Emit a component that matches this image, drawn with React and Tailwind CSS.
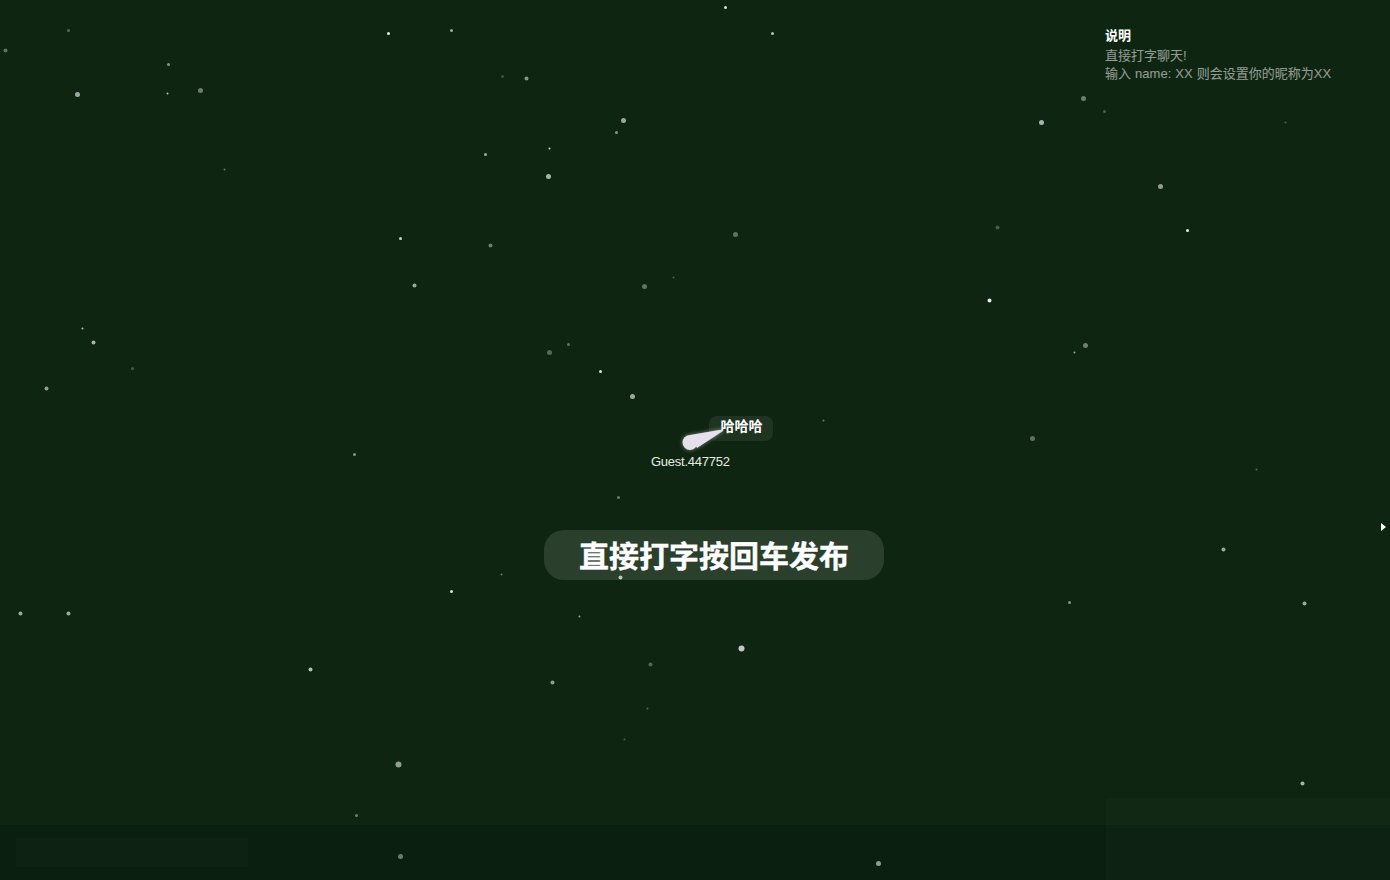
const stars = [
  [5, 50, 4, 0.35], [68, 30, 3, 0.3], [388, 33, 3, 0.9], [451, 30, 3, 0.6], [725, 7, 3, 0.85], [772, 33, 3, 0.7],
  [168, 64, 3, 0.5], [77, 94, 5, 0.6], [167, 93, 2, 0.7], [200, 90, 5, 0.4], [502, 76, 3, 0.2], [526, 78, 4, 0.5],
  [623, 120, 5, 0.6], [616, 132, 3, 0.5], [549, 148, 2, 0.8], [485, 154, 3, 0.6], [548, 176, 5, 0.65], [224, 169, 2, 0.35],
  [1083, 98, 5, 0.4], [1104, 111, 3, 0.25], [1041, 122, 5, 0.65], [1285, 122, 2, 0.3], [1160, 186, 5, 0.55], [1187, 230, 3, 0.9],
  [997, 227, 4, 0.25], [735, 234, 5, 0.35], [400, 238, 3, 0.8], [490, 245, 4, 0.4], [673, 277, 2, 0.25], [414, 285, 4, 0.6],
  [644, 286, 5, 0.35], [989, 300, 4, 0.9], [82, 328, 2, 0.7], [93, 342, 4, 0.65], [568, 344, 3, 0.35], [549, 352, 5, 0.3],
  [1085, 345, 5, 0.4], [1074, 352, 2, 0.6], [132, 368, 3, 0.25], [600, 371, 3, 0.85], [46, 388, 4, 0.55], [632, 396, 5, 0.6],
  [823, 420, 2, 0.4], [1032, 438, 5, 0.35], [354, 454, 3, 0.5], [1256, 469, 2, 0.3], [618, 497, 3, 0.4], [1223, 549, 4, 0.6],
  [501, 574, 2, 0.4], [620, 577, 4, 0.7], [451, 591, 3, 0.85], [1069, 602, 3, 0.5], [1304, 603, 4, 0.6], [20, 613, 4, 0.6], [68, 613, 4, 0.6],
  [579, 616, 2, 0.6], [741, 648, 6, 0.75], [650, 664, 4, 0.3], [310, 669, 4, 0.7], [552, 682, 4, 0.55], [647, 708, 2, 0.3],
  [624, 739, 2, 0.25], [398, 764, 6, 0.55], [1302, 783, 4, 0.65], [356, 815, 3, 0.4], [400, 856, 5, 0.4], [878, 863, 5, 0.55],
]

function Star({ x, y, size, opacity }) {
  return (
    <div
      className="absolute rounded-full bg-white"
      style={{
        left: x - size / 2,
        top: y - size / 2,
        width: size,
        height: size,
        opacity,
        transform: size % 2 === 0 ? 'translate(0.5px, 0.5px)' : undefined,
      }}
    />
  )
}

export default function App() {
  return (
    <div className="relative flex h-screen w-full flex-col overflow-hidden bg-[#0e2511] font-['Liberation_Sans','Noto_Sans_CJK_SC',sans-serif]">
      <main className="flex flex-1 flex-col">
        {/* Instructions */}
        <div className="flex justify-end pt-[27px]">
          <div className="w-[285px] text-[13px] leading-[17px]">
            <h3 className="font-bold text-white">说明</h3>
            <p className="mt-[3px] text-white/55">直接打字聊天!</p>
            <p className="mt-px text-white/55 [word-spacing:0.5px]">输入 name: XX 则会设置你的昵称为XX</p>
          </div>
        </div>

        {/* Hint */}
        <div className="flex justify-center pl-[38px] pt-[448px]">
          <div className="flex h-[50px] w-[340px] items-center justify-center rounded-[20px] bg-white/[0.12] pt-[3px] text-[30px] font-bold text-white [-webkit-text-stroke:0.4px_white]">
            直接打字按回车发布
          </div>
        </div>
      </main>

      {stars.map(([x, y, size, opacity]) => (
        <Star key={`${x}-${y}`} x={x} y={y} size={size} opacity={opacity} />
      ))}

      {/* Player on the canvas */}
      <div className="absolute left-[709px] top-[416px] flex h-[25px] w-[64px] justify-center rounded-lg bg-white/[0.07] pl-[1px] pt-[2px] text-[14px] font-bold leading-[17px] text-white">
        哈哈哈
      </div>
      <svg className="absolute left-[675px] top-[420px] drop-shadow-[0_0_2px_rgba(255,255,255,0.45)]" width="60" height="35" viewBox="0 0 60 35">
        <circle cx="15" cy="22.5" r="7.5" fill="#e6e0ea" />
        <path d="M15 15 L47 9.5 L48 11 L22 28 Z" fill="#e6e0ea" />
      </svg>
      <div className="absolute left-[651px] top-[453px] text-[13px] leading-[17px] tracking-[-0.25px] text-[#e8ece8]">Guest.447752</div>

      {/* Side toggle */}
      <div className="absolute right-[4px] top-[523px] h-0 w-0 border-y-[4px] border-l-[5px] border-y-transparent border-l-white" />

      {/* Ranking panel */}
      <div className="absolute bottom-0 right-0 h-[82px] w-[284px] bg-white/[0.015]" />

      {/* Bottom bar */}
      <footer className="flex h-[55px] shrink-0 items-center bg-[#0a1f10]/85 px-4">
        <div className="h-[29px] w-[232px] bg-white/[0.015]" />
      </footer>
    </div>
  )
}
